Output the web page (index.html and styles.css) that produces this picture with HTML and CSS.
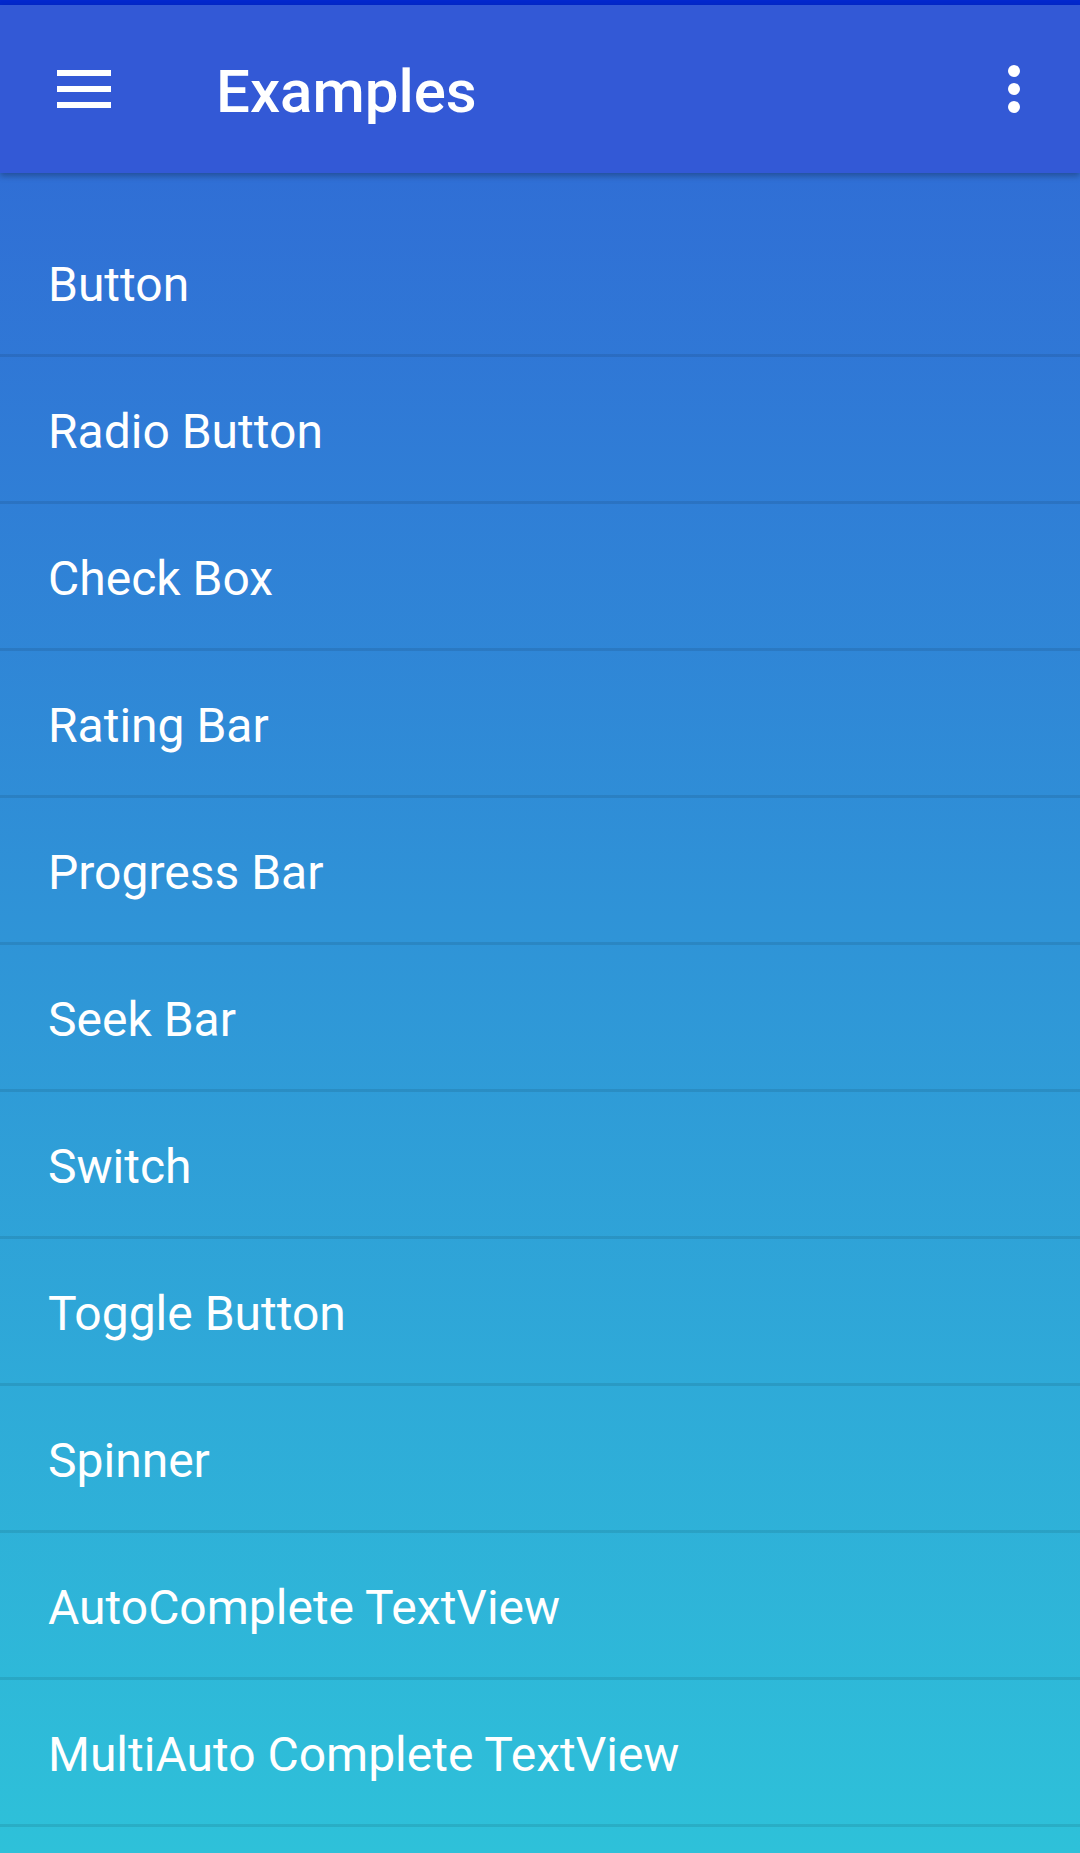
FILE: index.html
```html
<!DOCTYPE html>
<html lang="en">
<head>
    <meta charset="UTF-8">
    <meta name="viewport" content="width=device-width, initial-scale=1.0">
    <title>Examples</title>
    <link rel="stylesheet" href="styles.css">
</head>
<body>

<div class="pantalla">

    <div class="barra-estado"></div>

    <div class="toolbar">
        <div class="menu-icono">
            <span></span>
            <span></span>
            <span></span>
        </div>
        <div class="titulo">Examples</div>
        <div class="mas-icono">
            <span></span>
            <span></span>
            <span></span>
        </div>
    </div>

    <!-- Lista de ejemplos -->
    <ul class="lista">
        <li class="item">Button</li>
        <li class="item">Radio Button</li>
        <li class="item">Check Box</li>
        <li class="item">Rating Bar</li>
        <li class="item">Progress Bar</li>
        <li class="item">Seek Bar</li>
        <li class="item">Switch</li>
        <li class="item">Toggle Button</li>
        <li class="item">Spinner</li>
        <li class="item">AutoComplete TextView</li>
        <li class="item">MultiAuto Complete TextView</li>
    </ul>

</div>

</body>
</html>
```

FILE: styles.css
```css
html, body{
    margin: 0;
    padding: 0;
}

body{
    font-family: Roboto, "Liberation Sans", sans-serif;
    color: #ffffff;
    overflow: hidden;
}

.pantalla{
    width: 1080px;
    height: 1853px;
    display: flex;
    flex-direction: column;
    background: linear-gradient(to bottom, #3066d5 0px, #2ec1d9 1853px);
}

.barra-estado{
    height: 5px;
    background: #0328cd;
}

.toolbar{
    position: relative;
    z-index: 2;
    height: 168px;
    display: flex;
    align-items: center;
    background: #3359d6;
    box-shadow: 0px 3px 6px rgba(0, 0, 0, 0.28);
}

.menu-icono{
    width: 54px;
    margin-left: 57px;
    display: flex;
    flex-direction: column;
    gap: 10px;
}

.menu-icono span{
    display: block;
    height: 6px;
    background: #ffffff;
}

.titulo{
    margin-left: 105px;
    font-size: 60px;
    font-weight: 500;
    flex: 1;
    padding-top: 4px;
}

.mas-icono{
    width: 12px;
    margin-right: 60px;
    display: flex;
    flex-direction: column;
    gap: 6px;
}

.mas-icono span{
    display: block;
    width: 12px;
    height: 12px;
    border-radius: 50%;
    background: #ffffff;
}

.lista{
    list-style: none;
    margin: 0;
    padding: 37px 0px 0px 0px;
    flex: 1;
}

.item{
    box-sizing: border-box;
    height: 147px;
    padding: 5px 0px 0px 48px;
    line-height: 139px;
    font-size: 48px;
    border-bottom: 3px solid rgba(0, 0, 0, 0.09);
}
```
